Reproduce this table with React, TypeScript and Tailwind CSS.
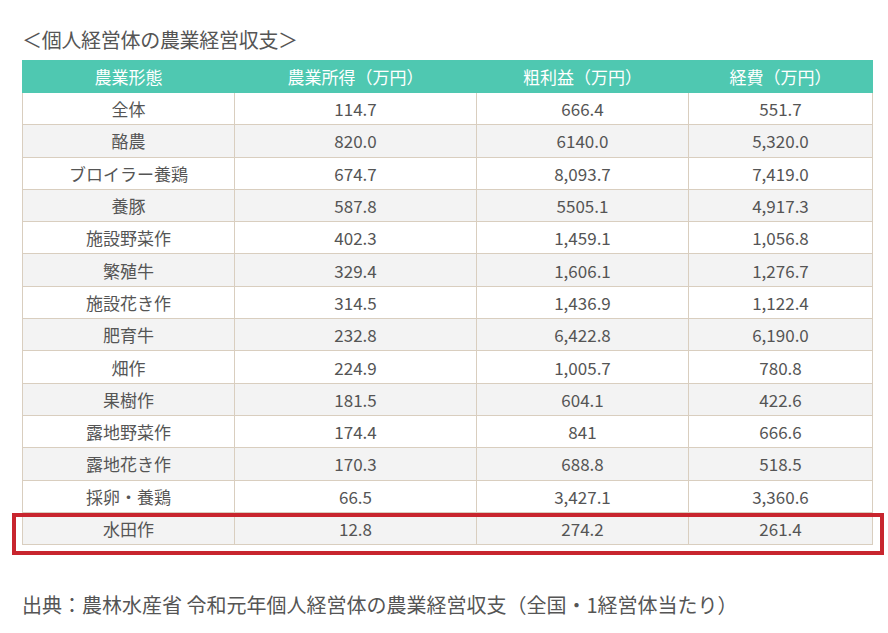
const rows: [string, string, string, string][] = [
  ["全体", "114.7", "666.4", "551.7"],
  ["酪農", "820.0", "6140.0", "5,320.0"],
  ["ブロイラー養鶏", "674.7", "8,093.7", "7,419.0"],
  ["養豚", "587.8", "5505.1", "4,917.3"],
  ["施設野菜作", "402.3", "1,459.1", "1,056.8"],
  ["繁殖牛", "329.4", "1,606.1", "1,276.7"],
  ["施設花き作", "314.5", "1,436.9", "1,122.4"],
  ["肥育牛", "232.8", "6,422.8", "6,190.0"],
  ["畑作", "224.9", "1,005.7", "780.8"],
  ["果樹作", "181.5", "604.1", "422.6"],
  ["露地野菜作", "174.4", "841", "666.6"],
  ["露地花き作", "170.3", "688.8", "518.5"],
  ["採卵・養鶏", "66.5", "3,427.1", "3,360.6"],
  ["水田作", "12.8", "274.2", "261.4"],
];

const heads = ["農業形態", "農業所得（万円）", "粗利益（万円）", "経費（万円）"];
const widths = ["w-[212px]", "w-[242px]", "w-[212px]", "w-[184px]"];

export default function App() {
  return (
    <div
      className="h-[633px] w-[888px] overflow-hidden bg-white pl-[22px] text-[#555]"
      style={{ fontFamily: '"Noto Sans CJK JP", "Noto Sans", sans-serif' }}
    >
      <h2 className="mt-[26px] h-[28px] text-[20px] font-normal leading-[28px] tracking-[-0.3px]">
        ＜個人経営体の農業経営収支＞
      </h2>

      <div className="relative mt-[6px] w-[850px]">
        <table className="w-[850px] table-fixed border-collapse text-center text-[17px]">
          <thead>
            <tr className="bg-[#4fc8b1] text-white">
              {heads.map((h, i) => (
                <th
                  key={h}
                  className={`${widths[i]} h-[32px] border border-[#4fc8b1] p-0 font-normal leading-none ${
                    i > 0 ? "border-l-[#a7e4d8]" : ""
                  }`}
                >
                  {h}
                </th>
              ))}
            </tr>
          </thead>
          <tbody>
            {rows.map((r, ri) => (
              <tr key={r[0]} className={ri % 2 === 1 ? "bg-[#f3f3f3]" : "bg-white"}>
                {r.map((c, ci) => (
                  <td
                    key={ci}
                    className="h-[32.3px] border border-[#d9cebf] p-0 leading-none"
                  >
                    {c}
                  </td>
                ))}
              </tr>
            ))}
          </tbody>
        </table>
        {/* highlight around the last row */}
        <div className="pointer-events-none absolute left-[-10px] top-[453px] h-[42px] w-[872px] border-[4px] border-[#c8252e]" />
      </div>

      <p className="mt-[46px] h-[28px] text-[20px] leading-[28px]">
        出典：農林水産省 令和元年個人経営体の農業経営収支（全国・1経営体当たり）
      </p>
    </div>
  );
}
